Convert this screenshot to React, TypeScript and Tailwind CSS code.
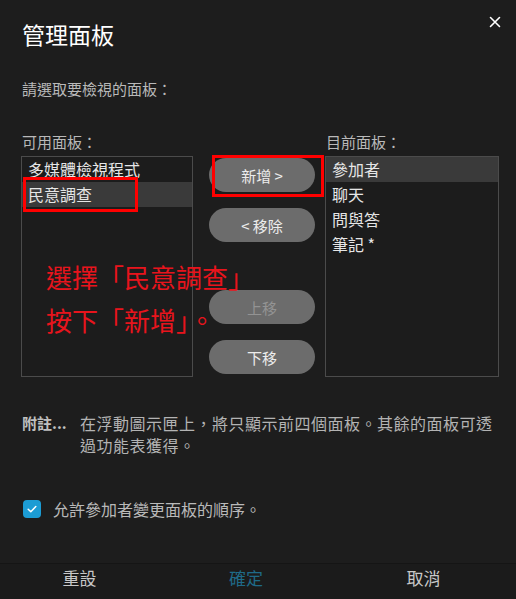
import React from "react";

const leftItems = ["多媒體檢視程式", "民意調查"];
const rightItems = ["參加者", "聊天", "問與答", "筆記 *"];

function Pill({ children, disabled }: { children: React.ReactNode; disabled?: boolean }) {
  return (
    <div
      className={
        "w-[106px] h-[34px] rounded-full bg-[#6c6c6c] flex items-center justify-center text-[15px] leading-none " +
        (disabled ? "text-[#939393]" : "text-[#ececec]")
      }
    >
      {children}
    </div>
  );
}

export default function App() {
  return (
    <div className="relative w-[516px] h-[599px] overflow-hidden bg-[#1d1d1d] font-['Noto_Sans_CJK_TC','Noto_Sans',sans-serif] text-[#bdbdbd]">
      {/* close */}
      <div className="absolute top-[16px] right-[15px] w-[12px] h-[12px]">
        <svg viewBox="0 0 12 12" width="12" height="12">
          <path d="M1.5 1.5 L10.5 10.5 M10.5 1.5 L1.5 10.5" stroke="#ffffff" strokeWidth="1.6" strokeLinecap="round" />
        </svg>
      </div>

      <div className="pl-[21px] pt-[22px]">
        <div className="text-[23px] leading-[24px] text-white pl-px">管理面板</div>
        <div className="mt-[35px] text-[15px] leading-[16px] text-[#b9b9b9] pl-px">請選取要檢視的面板：</div>

        <div className="mt-[37px] flex items-start">
          {/* left */}
          <div className="flex flex-col">
            <div className="text-[15px] leading-[16px] text-[#b9b9b9] pl-px">可用面板：</div>
            <div className="mt-[6px] w-[172px] h-[221px] border border-[#4b4b4b] bg-[#1c1c1c]">
              {leftItems.map((t, i) => (
                <div
                  key={t}
                  className={
                    "h-[25px] leading-[25px] text-[16px] pl-[6px] text-[#e6e6e6] " + (i === 1 ? "bg-[#3a3a3a]" : "")
                  }
                >
                  {t}
                </div>
              ))}
            </div>
          </div>

          {/* middle */}
          <div className="ml-[16px] pt-[24px] flex flex-col">
            <Pill>新增 &gt;</Pill>
            <div className="mt-[16px]">
              <Pill>&lt; 移除</Pill>
            </div>
            <div className="mt-[48px]">
              <Pill disabled>上移</Pill>
            </div>
            <div className="mt-[16px]">
              <Pill>下移</Pill>
            </div>
          </div>

          {/* right */}
          <div className="ml-[10px] flex flex-col">
            <div className="text-[15px] leading-[16px] text-[#b9b9b9] pl-px">目前面板：</div>
            <div className="mt-[6px] w-[174px] h-[221px] border border-[#4b4b4b] bg-[#1c1c1c]">
              {rightItems.map((t, i) => (
                <div
                  key={t}
                  className={
                    "h-[25px] leading-[25px] text-[16px] pl-[6px] text-[#e6e6e6] " + (i === 0 ? "bg-[#3a3a3a]" : "")
                  }
                >
                  {t}
                </div>
              ))}
            </div>
          </div>
        </div>

        {/* note */}
        <div className="mt-[35px] flex items-start text-[16px] leading-[22px]">
          <div className="w-[59px] pl-px font-bold text-[#c0c0c0] text-[15px]">附註...</div>
          <div className="whitespace-nowrap tracking-[0.5px] text-[#b3b3b3]">
            在浮動圖示匣上，將只顯示前四個面板。其餘的面板可透
            <br />
            過功能表獲得。
          </div>
        </div>

        {/* checkbox */}
        <div className="mt-[44px] flex items-center h-[18px]">
          <div className="ml-[2px] w-[18px] h-[18px] rounded-[4px] bg-[#1c9cd4] flex items-center justify-center">
            <svg viewBox="0 0 12 12" width="12" height="12">
              <path d="M2.2 6.3 L4.8 8.8 L9.8 3.6" fill="none" stroke="#ffffff" strokeWidth="1.5" strokeLinecap="round" strokeLinejoin="round" />
            </svg>
          </div>
          <div className="ml-[12px] text-[16px] leading-[18px] text-[#b9b9b9]">允許參加者變更面板的順序。</div>
        </div>
      </div>

      {/* footer */}
      <div className="absolute left-0 right-0 bottom-0 h-[36px] border-t border-[#151515] bg-[#1b1b1b] flex items-start pt-[4px] text-[17px] leading-[20px]">
        <div className="w-[159px] text-center text-[#c8c8c8]">重設</div>
        <div className="w-[174px] text-center text-[#1f6a88]">確定</div>
        <div className="w-[181px] text-center text-[#c8c8c8]">取消</div>
      </div>

      {/* annotation overlays */}
      <div className="absolute left-[23px] top-[177px] w-[115px] h-[35px] border-[3px] border-[#ff0000]" />
      <div className="absolute left-[212px] top-[155px] w-[112px] h-[42px] border-[3px] border-[#ff0000]" />
      <div className="absolute left-[46px] top-[255px] text-[26px] leading-[43px] text-[#e8141c] whitespace-nowrap">
        <div>選擇「民意調查」</div>
        <div>按下「新增」。</div>
      </div>
    </div>
  );
}
